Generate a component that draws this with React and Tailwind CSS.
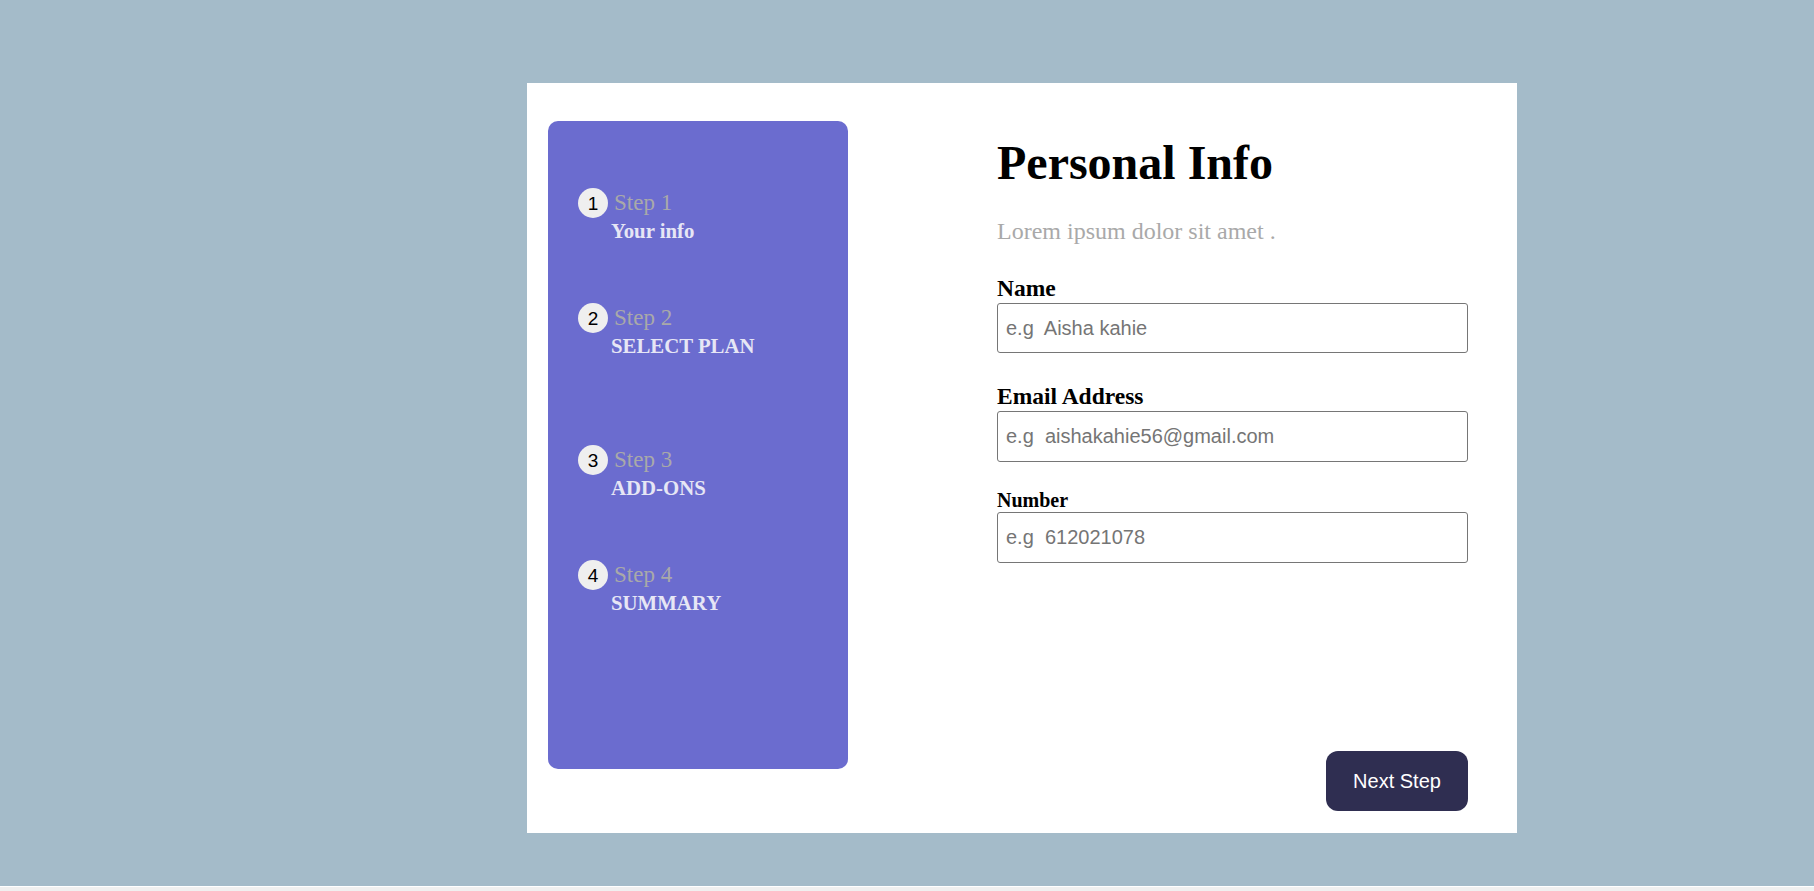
import React from 'react';

const steps = [
  { num: 1, title: 'Step 1', label: 'Your info', gap: 'mt-0' },
  { num: 2, title: 'Step 2', label: 'SELECT PLAN', gap: 'mt-[62px]' },
  { num: 3, title: 'Step 3', label: 'ADD-ONS', gap: 'mt-[89px]' },
  { num: 4, title: 'Step 4', label: 'SUMMARY', gap: 'mt-[62px]' },
];

const serif = { fontFamily: '"Liberation Serif", "Times New Roman", serif' };

const App = () => {
  return (
    <div className="w-[1814px] min-h-[891px] bg-[#f0f0f0]" style={serif}>
      <div className="h-[887px] bg-[#a4bbc9] pt-[83px] pl-[527px] border-b border-white">
        {/* Card */}
        <div className="flex w-[990px] h-[750px] bg-white pl-[21px] pr-[49px]">
          {/* Sidebar */}
          <div className="mt-[38px] w-[300px] h-[648px] rounded-[10px] bg-[#6b6ccf] pt-[67px] pl-[30px]">
            {steps.map((step) => (
              <div key={step.num} className={step.gap}>
                <div className="flex items-center h-[30px]">
                  <span
                    className="flex items-center justify-center w-[30px] h-[30px] rounded-full bg-[#efefef] text-black text-[19px] leading-none"
                    style={{ fontFamily: '"Liberation Sans", Arial, sans-serif' }}
                  >
                    {step.num}
                  </span>
                  <span className="ml-[6px] text-[23px] leading-[30px] text-[#a9a9a9]">{step.title}</span>
                </div>
                <p className="mt-[3px] ml-[33px] text-[20.8px] leading-[20px] font-bold text-[#e6e6f5]">
                  {step.label}
                </p>
              </div>
            ))}
          </div>

          {/* Form */}
          <div className="ml-[149px] w-[471px] flex flex-col pt-[56px] pb-[22px]">
            <h1 className="text-[48px] leading-[48px] font-bold text-black">Personal Info</h1>
            <p className="mt-[32px] text-[24px] leading-[24px] text-[#a9a9a9]">Lorem ipsum dolor sit amet .</p>

            <label className="mt-[33px] text-[23.5px] leading-[24px] font-bold text-black">Name</label>
            <input
              type="text"
              placeholder="e.g  Aisha kahie"
              className="mt-[3px] h-[50px] w-full rounded-[3px] border border-[#767676] px-[8px] text-[20px] placeholder:text-[#757575]"
              style={{ fontFamily: '"Liberation Sans", Arial, sans-serif' }}
            />

            <label className="mt-[31px] text-[23.5px] leading-[24px] font-bold text-black">Email Address</label>
            <input
              type="email"
              placeholder="e.g  aishakahie56@gmail.com"
              className="mt-[3px] h-[51px] w-full rounded-[3px] border border-[#767676] px-[8px] text-[20px] placeholder:text-[#757575]"
              style={{ fontFamily: '"Liberation Sans", Arial, sans-serif' }}
            />

            <label className="mt-[28px] text-[20px] leading-[20px] font-bold text-black">Number</label>
            <input
              type="text"
              placeholder="e.g  612021078"
              className="mt-[2px] h-[51px] w-full rounded-[3px] border border-[#767676] px-[8px] text-[20px] placeholder:text-[#757575]"
              style={{ fontFamily: '"Liberation Sans", Arial, sans-serif' }}
            />

            <button
              className="mt-auto self-end w-[142px] h-[60px] rounded-[12px] bg-[#2f2e51] text-white text-[20px]"
              style={{ fontFamily: '"Liberation Sans", Arial, sans-serif' }}
            >
              Next Step
            </button>
          </div>
        </div>
      </div>
    </div>
  );
};

export default App;
